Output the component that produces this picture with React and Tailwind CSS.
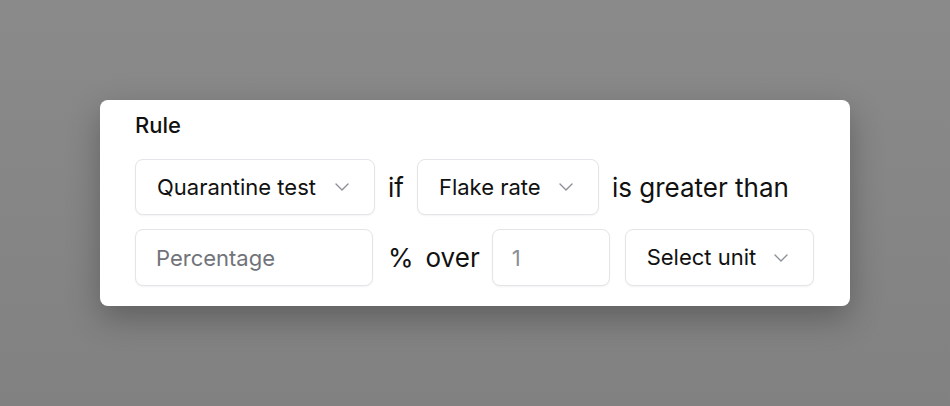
import { useState } from 'react';

function Chevron() {
  return (
    <svg width="14" height="8" viewBox="0 0 14 8" fill="none" className="shrink-0">
      <polyline points="1,1 7,7 13,1" stroke="#8b9099" strokeWidth="1.4" strokeLinecap="round" strokeLinejoin="round" />
    </svg>
  );
}

function SelectBox({ label, width }) {
  return (
    <button
      type="button"
      className={`flex items-center justify-between h-[56px] pl-[21px] pr-[25px] rounded-lg border border-[#e4e5e8] bg-white shadow-[0_1px_2px_rgba(0,0,0,0.05)] text-[22px] text-[#111111] ${width}`}
    >
      <span>{label}</span>
      <Chevron />
    </button>
  );
}

export default function App() {
  const [percent, setPercent] = useState('');
  const [count, setCount] = useState('');

  return (
    <div
      className="w-full h-[406px] flex items-center justify-center bg-gradient-to-b from-[#8a8a8a] to-[#818181]"
      style={{ fontFamily: 'Inter, "Noto Sans", sans-serif' }}
    >
      <div className="w-[750px] bg-white rounded-lg shadow-[0_12px_32px_rgba(0,0,0,0.28)] px-[35px] pt-[11px] pb-[20px]">
        <div className="text-[22px] leading-[28px] font-medium text-[#111111] mb-[20px]">Rule</div>

        <div className="flex items-center text-[26px] text-[#111111]">
          <SelectBox label="Quarantine test" width="w-[240px] shrink-0" />
          <span className="ml-[13px]">if</span>
          <div className="ml-[13px] shrink-0">
            <SelectBox label="Flake rate" width="w-[182px]" />
          </div>
          <span className="ml-[13px] whitespace-nowrap">is greater than</span>
        </div>

        <div className="flex items-center mt-[14px] text-[26px] text-[#111111]">
          <input
            value={percent}
            onChange={(e) => setPercent(e.target.value)}
            placeholder="Percentage"
            className="shrink-0 w-[238px] h-[57px] px-[20px] text-[22px] rounded-lg border border-[#e4e5e8] bg-white shadow-[0_1px_2px_rgba(0,0,0,0.05)] outline-none placeholder:text-[#71737a]"
          />
          <span className="ml-[15px]">%</span>
          <span className="ml-[12px]">over</span>
          <input
            value={count}
            onChange={(e) => setCount(e.target.value)}
            placeholder="1"
            className="shrink-0 ml-[12px] w-[118px] h-[57px] px-[19px] text-[22px] rounded-lg border border-[#e4e5e8] bg-white shadow-[0_1px_2px_rgba(0,0,0,0.05)] outline-none placeholder:text-[#8a8d94]"
          />
          <div className="ml-[15px] shrink-0">
            <SelectBox label="Select unit" width="w-[189px] h-[57px]" />
          </div>
        </div>
      </div>
    </div>
  );
}
